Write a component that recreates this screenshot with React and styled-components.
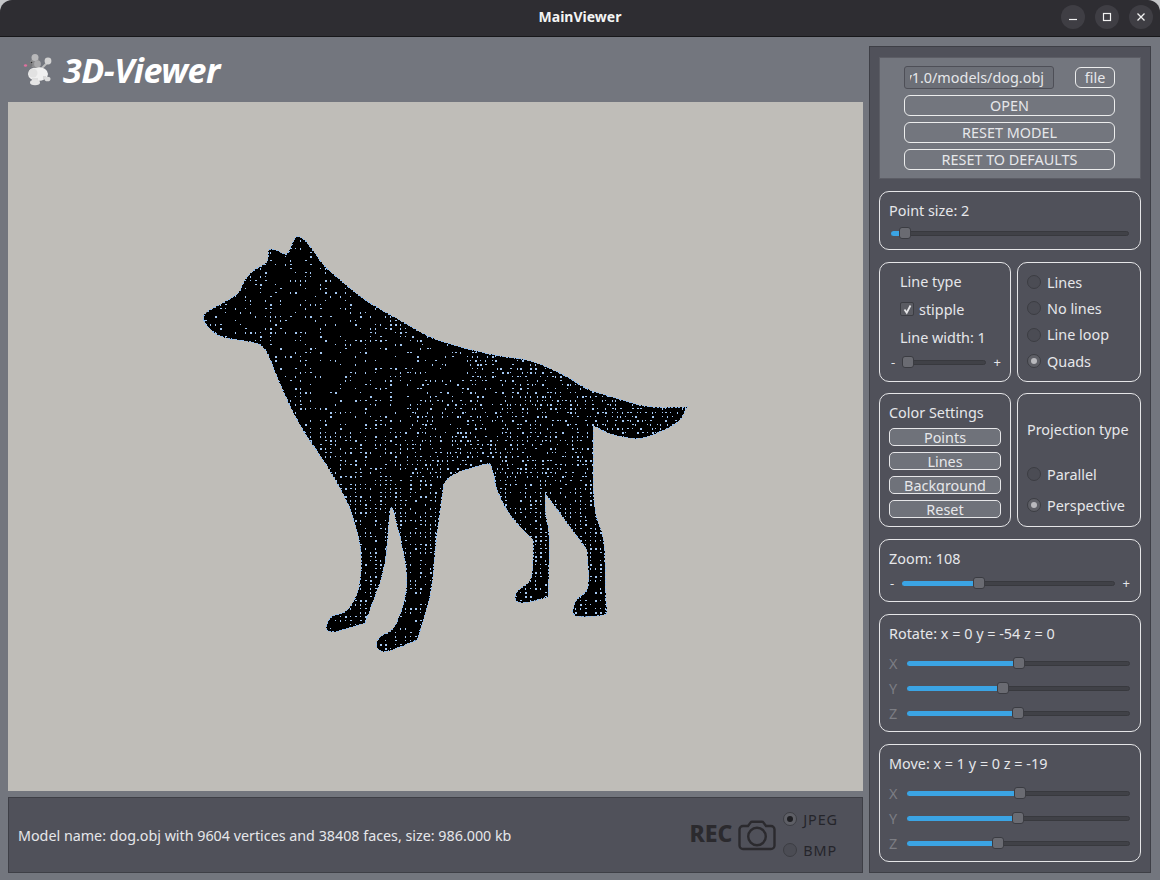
import React from 'react';
import styled, { createGlobalStyle } from 'styled-components';

const GlobalStyle = createGlobalStyle`
    html, body {
        margin: 0;
        padding: 0;
        background: #c4c5c8;
    }
    * {
        box-sizing: border-box;
    }
`;

// outline of the model, in page coordinates
const DOG_OUTLINE = [
    [203, 317], [206, 312], [223, 303], [240, 293], [243, 282], [253, 270], [268, 263], [268, 255], [269, 248], [279, 251], [287, 256], [292, 245], [295, 237],
    [299, 236], [305, 240], [315, 253], [323, 265], [340, 280], [367, 302], [403, 322], [430, 338], [463, 348], [497, 356], [530, 360],
    [547, 367], [570, 378], [587, 390], [617, 398], [647, 408], [687, 407], [687, 407], [680, 422], [660, 432], [643, 439], [627, 438],
    [607, 433], [594, 426], [593, 426], [593, 513], [605, 537], [605, 587], [607, 613], [607, 615], [583, 617], [574, 616], [572, 610], [577, 598], [590, 590], [587, 550], [587, 550], [545, 493], [545, 493],
    [545, 515], [550, 533], [548, 597], [548, 597], [527, 603], [515, 602], [515, 594], [522, 587], [533, 580], [533, 540], [533, 540], [513, 520], [497, 493],
    [492, 465], [487, 463], [445, 476], [442, 497], [435, 547], [432, 593], [417, 640], [417, 640], [388, 652], [378, 651], [376, 643], [380, 636],
    [395, 630], [407, 593], [407, 567], [393, 507], [390, 507], [388, 533], [385, 570], [365, 623], [365, 623], [337, 632], [326, 632],
    [327, 622], [333, 615], [347, 613], [360, 590], [362, 553], [355, 523], [347, 500], [325, 462], [300, 427], [277, 378], [265, 345],
    [247, 341], [223, 338], [213, 332], [205, 324],
];

// corners are cut through the midpoints, so the silhouette stays soft as in the render
const buildDogPath = (points) => {
    const mid = (a, b) => [(a[0] + b[0]) / 2, (a[1] + b[1]) / 2];
    const start = mid(points[points.length - 1], points[0]);
    let d = `M${start[0]} ${start[1]}`;
    points.forEach((p, i) => {
        const m = mid(p, points[(i + 1) % points.length]);
        d += `Q${p[0]} ${p[1]} ${m[0]} ${m[1]}`;
    });
    return d + 'Z';
};
const DOG_PATH = buildDogPath(DOG_OUTLINE);

const buildDots = () => {
    let seed = 1337;
    const rand = () => {
        seed = (seed * 16807) % 2147483647;
        return seed / 2147483647;
    };
    let d = '';
    for (let y = 236; y < 655; y += 4) {
        for (let x = 200; x < 690; x += 5) {
            // the front of the chest is sparse, the belly and the tail are dense
            let keep = 0.55;
            if (x < 410 && y < 430) keep = 0.32;
            if (x > 410 && y < 480) keep = 0.62;
            if (x > 595) keep = 0.75;
            if (x > 300 && y > 340 && y < 400 && x < 470) keep = 0.3;
            if (rand() > keep) continue;
            const jitter = x > 400 && y < 480 && rand() > 0.5 ? 2 : 0;
            const w = rand() > 0.65 ? 2 : 1;
            const h = rand() > 0.5 ? 2 : 1;
            d += `M${x + jitter} ${y}h${w}v${h}h-${w}z`;
        }
    }
    return d;
};
const DOG_DOTS = buildDots();

const Slider = ({ width, at }) => (
    <Track $width={width}>
        <TrackFill $at={at} />
        <Handle $at={at} />
    </Track>
);

const Radio = ({ label, checked, dark }) => (
    <RadioRow $dark={dark}>
        <RadioMark $checked={checked} $dark={dark} />
        {label}
    </RadioRow>
);

const AxisSliders = ({ rows }) => (
    <AxisList>
        {rows.map((row) => (
            <AxisRow key={row.name}>
                <AxisName>{row.name}</AxisName>
                <Slider width={row.width} at={row.at} />
            </AxisRow>
        ))}
    </AxisList>
);

const App = () => {
    return (
        <Window>
            <GlobalStyle />
            <TitleBar>
                <WindowTitle>MainViewer</WindowTitle>
                <WindowControls>
                    <WindowButton aria-label="minimize">
                        <svg width="12" height="12" viewBox="0 0 12 12"><path d="M2 8.5h8" stroke="#f2f2f2" strokeWidth="1.2" /></svg>
                    </WindowButton>
                    <WindowButton aria-label="maximize">
                        <svg width="12" height="12" viewBox="0 0 12 12"><rect x="2.5" y="2.5" width="7" height="7" fill="none" stroke="#f2f2f2" strokeWidth="1.2" /></svg>
                    </WindowButton>
                    <WindowButton aria-label="close">
                        <svg width="12" height="12" viewBox="0 0 12 12"><path d="M2.5 2.5l7 7M9.5 2.5l-7 7" stroke="#f2f2f2" strokeWidth="1.3" /></svg>
                    </WindowButton>
                </WindowControls>
            </TitleBar>

            <Content>
                <ViewerColumn>
                    <Header>
                        <svg width="30" height="32" viewBox="0 0 30 32">
                            <path d="M19 14l6-6" stroke="#bdbdbd" strokeWidth="2" />
                            <circle cx="25" cy="7" r="3.4" fill="#d2d2d2" />
                            <ellipse cx="15" cy="20" rx="10" ry="7" fill="#f0f0f0" />
                            <circle cx="10" cy="19" r="4.5" fill="#e2e2e2" />
                            <rect x="9" y="24" width="6" height="4" fill="#e0e0e0" />
                            <rect x="20" y="22" width="3" height="3" fill="#d8d8d8" />
                            <ellipse cx="12" cy="28.5" rx="5" ry="2.7" fill="#e4e4e4" />
                            <ellipse cx="24.5" cy="25" rx="3" ry="2.3" fill="#dcdcdc" />
                            <circle cx="12" cy="9" r="5" fill="#8c8c8e" />
                            <circle cx="12" cy="3.5" r="3.5" fill="#b8b8ba" />
                            <circle cx="14.5" cy="10" r="3.4" fill="#a9a9ab" />
                            <ellipse cx="6" cy="11" rx="3.5" ry="2" fill="#77777a" />
                            <ellipse cx="2.5" cy="11.5" rx="1.6" ry="1.2" fill="#e070a0" />
                            <circle cx="8.5" cy="8.5" r="0.8" fill="#2c2c2c" />
                        </svg>
                        <Heading>3D-Viewer</Heading>
                    </Header>

                    <Canvas>
                        <svg width="855" height="689" viewBox="8 102 855 689" shapeRendering="crispEdges">
                            <defs>
                                <clipPath id="dog-clip"><path d={DOG_PATH} /></clipPath>
                            </defs>
                            <path d={DOG_PATH} fill="#000" stroke="#8ab8ee" strokeWidth="1" strokeDasharray="2 1.5" />
                            <path d={DOG_DOTS} fill="#a4c8f2" clipPath="url(#dog-clip)" />
                        </svg>
                    </Canvas>

                    <StatusBar>
                        <StatusText>Model name: dog.obj with 9604 vertices and 38408 faces, size: 986.000 kb</StatusText>
                        <RecordGroup>
                            <RecLabel>REC</RecLabel>
                            <svg width="38" height="31" viewBox="0 0 38 31" fill="none" stroke="#2b2a2e" strokeWidth="2.4">
                                <path d="M5 6h5l2.5-3.4a2 2 0 0 1 1.6-.8h9.8a2 2 0 0 1 1.6.8L28 6h5a3.5 3.5 0 0 1 3.5 3.5v16a3.5 3.5 0 0 1-3.5 3.5H5a3.5 3.5 0 0 1-3.5-3.5v-16A3.5 3.5 0 0 1 5 6z" />
                                <circle cx="19" cy="16.5" r="8.8" />
                            </svg>
                            <FormatList>
                                <Radio label="JPEG" checked dark />
                                <Radio label="BMP" dark />
                            </FormatList>
                        </RecordGroup>
                    </StatusBar>
                </ViewerColumn>

                <SidePanel>
                    <FileBlock>
                        <FileRow>
                            <PathField>
                                <PathClip>v1.0/models/dog.obj</PathClip>
                            </PathField>
                            <FileButton>file</FileButton>
                        </FileRow>
                        <BlockButton>OPEN</BlockButton>
                        <BlockButton>RESET MODEL</BlockButton>
                        <BlockButton>RESET TO DEFAULTS</BlockButton>
                    </FileBlock>

                    <PointBox>
                        <Label>Point size: 2</Label>
                        <SliderRow>
                            <Slider width={238} at={14} />
                        </SliderRow>
                    </PointBox>

                    <TwoColumns>
                        <LineTypeBox>
                            <Label>Line type</Label>
                            <CheckRow>
                                <CheckMark>
                                    <svg width="11" height="11" viewBox="0 0 11 11"><path d="M2.5 5.5l2.2 3.2L8.5 1.5" fill="none" stroke="#e4e4e6" strokeWidth="1.8" /></svg>
                                </CheckMark>
                                stipple
                            </CheckRow>
                            <Label>Line width: 1</Label>
                            <LineSliderRow>
                                <Sign>-</Sign>
                                <Slider width={83} at={5} />
                                <Sign>+</Sign>
                            </LineSliderRow>
                        </LineTypeBox>
                        <RadioBox>
                            <Radio label="Lines" />
                            <Radio label="No lines" />
                            <Radio label="Line loop" />
                            <Radio label="Quads" checked />
                        </RadioBox>
                    </TwoColumns>

                    <ColorRow>
                        <ColorBox>
                            <Label>Color Settings</Label>
                            <ColorButtons>
                                <ColorButton>Points</ColorButton>
                                <ColorButton>Lines</ColorButton>
                                <ColorButton>Background</ColorButton>
                                <ColorButton>Reset</ColorButton>
                            </ColorButtons>
                        </ColorBox>
                        <ProjectionBox>
                            <ProjectionTitle>Projection type</ProjectionTitle>
                            <Radio label="Parallel" />
                            <Radio label="Perspective" checked />
                        </ProjectionBox>
                    </ColorRow>

                    <ZoomBox>
                        <Label>Zoom: 108</Label>
                        <ZoomSliderRow>
                            <Sign>-</Sign>
                            <Slider width={213} at={77} />
                            <Sign>+</Sign>
                        </ZoomSliderRow>
                    </ZoomBox>

                    <AxisBox>
                        <Label>Rotate: x = 0 y = -54 z = 0</Label>
                        <AxisSliders
                            rows={[
                                { name: 'X', width: 223, at: 112 },
                                { name: 'Y', width: 223, at: 96 },
                                { name: 'Z', width: 223, at: 111 },
                            ]}
                        />
                    </AxisBox>

                    <AxisBox>
                        <Label>Move: x = 1 y = 0 z = -19</Label>
                        <AxisSliders
                            rows={[
                                { name: 'X', width: 223, at: 113 },
                                { name: 'Y', width: 223, at: 111 },
                                { name: 'Z', width: 223, at: 91 },
                            ]}
                        />
                    </AxisBox>
                </SidePanel>
            </Content>
        </Window>
    );
};

export default App;

const FONT = `"Noto Sans", "Open Sans", sans-serif`;
const TEXT = '#e6e7ea';
const PANEL = '#50515a';
const SURFACE = '#73767e';

const Window = styled.div`
    width: 1160px;
    height: 880px;
    display: flex;
    flex-direction: column;
    overflow: hidden;
    font-family: ${FONT};
    font-size: 14.4px;
    color: ${TEXT};
`;

const TitleBar = styled.div`
    position: relative;
    height: 37px;
    flex-shrink: 0;
    display: flex;
    align-items: center;
    justify-content: center;
    background: #2e2d32;
    border-bottom: 1px solid #17171a;
    border-radius: 12px 12px 0 0;
    padding-bottom: 4px;
`;

const WindowTitle = styled.div`
    color: #f4f4f4;
    font-weight: 700;
    font-size: 14px;
`;

const WindowControls = styled.div`
    position: absolute;
    right: 7px;
    top: 5px;
    display: flex;
    gap: 10px;
`;

const WindowButton = styled.div`
    width: 24px;
    height: 24px;
    border-radius: 50%;
    background: #3f3e44;
    display: flex;
    align-items: center;
    justify-content: center;
`;

const Content = styled.div`
    flex: 1;
    display: flex;
    gap: 6px;
    padding: 0 9px 7px 8px;
    background: ${SURFACE};
    min-height: 0;
`;

const ViewerColumn = styled.div`
    width: 855px;
    display: flex;
    flex-direction: column;
`;

const Header = styled.div`
    height: 65px;
    flex-shrink: 0;
    display: flex;
    align-items: center;
    gap: 10px;
    padding: 1px 0 0 15px;
`;

const Heading = styled.div`
    color: #fff;
    font-size: 34px;
    font-weight: 700;
    font-style: italic;
    letter-spacing: -0.5px;
`;

const Canvas = styled.div`
    height: 689px;
    flex-shrink: 0;
    background: #bfbdb8;
    svg {
        display: block;
    }
`;

const StatusBar = styled.div`
    margin-top: 6px;
    height: 76px;
    display: flex;
    align-items: center;
    justify-content: space-between;
    padding: 0 24px 0 9px;
    background: ${PANEL};
    border: 1px solid #3e3f46;
`;

const StatusText = styled.div`
    padding-top: 1px;
    font-size: 14.3px;
`;

const RecordGroup = styled.div`
    display: flex;
    align-items: center;
`;

const RecLabel = styled.div`
    color: #2b2a2e;
    font-size: 23px;
    font-weight: 800;
    margin: 0 6px 4px 0;
`;

const FormatList = styled.div`
    margin: 0 0 1px 7px;
    display: flex;
    flex-direction: column;
    gap: 11px;
    letter-spacing: 0.9px;
`;

const RadioRow = styled.div`
    display: flex;
    align-items: center;
    gap: 6px;
    height: 20px;
    color: ${(props) => (props.$dark ? '#25252b' : TEXT)};
`;

const RadioMark = styled.span`
    width: 14px;
    height: 14px;
    border-radius: 50%;
    flex-shrink: 0;
    display: flex;
    align-items: center;
    justify-content: center;
    border: 1px solid #3c3d43;
    background: ${(props) => (props.$checked ? '#5e5f66' : '#4b4c54')};
    &::after {
        content: '';
        width: 6px;
        height: 6px;
        border-radius: 50%;
        display: ${(props) => (props.$checked ? 'block' : 'none')};
        background: ${(props) => (props.$dark ? '#1f1f23' : '#b9b9bd')};
    }
`;

const SidePanel = styled.div`
    margin-top: 9px;
    width: 282px;
    height: 827px;
    display: flex;
    flex-direction: column;
    gap: 12px;
    padding: 10px 9px;
    background: ${PANEL};
    border: 1px solid #3e3f46;
`;

const FileBlock = styled.div`
    height: 122px;
    flex-shrink: 0;
    display: flex;
    flex-direction: column;
    gap: 6px;
    padding: 8px 25px 0 24px;
    background: ${SURFACE};
    border: 1px solid #5c5d65;
`;

const FileRow = styled.div`
    display: flex;
    align-items: center;
    justify-content: space-between;
`;

const PathField = styled.div`
    width: 150px;
    height: 23px;
    padding: 0 9px 0 5px;
    display: flex;
    align-items: center;
    background: #6c6f77;
    border: 1px solid #4e4f57;
    border-radius: 3px;
`;

const PathClip = styled.div`
    flex: 1;
    min-width: 0;
    display: flex;
    justify-content: flex-end;
    overflow: hidden;
    white-space: nowrap;
`;

const FileButton = styled.div`
    width: 40px;
    height: 21px;
    display: flex;
    align-items: center;
    justify-content: center;
    border: 1px solid #eceded;
    border-radius: 6px;
    background: ${SURFACE};
`;

const BlockButton = styled.div`
    height: 21px;
    display: flex;
    align-items: center;
    justify-content: center;
    border: 1px solid #eceded;
    border-radius: 6px;
`;

const GroupBox = styled.div`
    border: 1px solid #e6e6e8;
    border-radius: 10px;
    flex-shrink: 0;
`;

const PointBox = styled(GroupBox)`
    height: 59px;
    padding: 9px 10px 0 9px;
`;

const Label = styled.div`
    height: 20px;
    line-height: 20px;
    white-space: nowrap;
`;

const SliderRow = styled.div`
    display: flex;
    align-items: center;
    height: 12px;
    margin-top: 6px;
    padding-left: 2px;
`;

const Track = styled.div`
    position: relative;
    flex-shrink: 0;
    width: ${(props) => props.$width}px;
    height: 5px;
    background: #404147;
    border: 1px solid #38393e;
    border-radius: 3px;
`;

const TrackFill = styled.div`
    position: absolute;
    left: -1px;
    top: -1px;
    height: 5px;
    width: ${(props) => props.$at}px;
    background: #3ba4e4;
    border-radius: 3px 0 0 3px;
`;

const Handle = styled.div`
    position: absolute;
    top: -5px;
    left: ${(props) => props.$at - 7}px;
    width: 12px;
    height: 12px;
    background: #6a6b72;
    border: 1px solid #3b3c42;
    border-radius: 3px;
`;

const TwoColumns = styled.div`
    display: flex;
    gap: 6px;
    flex-shrink: 0;
    height: 120px;
`;

const ColorRow = styled(TwoColumns)`
    height: 134px;
    margin-top: -1px;
`;

const LineTypeBox = styled(GroupBox)`
    width: 132px;
    padding: 9px 10px 0 20px;
    display: flex;
    flex-direction: column;
`;

const CheckRow = styled.div`
    display: flex;
    align-items: center;
    gap: 5px;
    height: 20px;
    margin: 7px 0 9px;
`;

const CheckMark = styled.span`
    width: 14px;
    height: 14px;
    display: flex;
    align-items: center;
    justify-content: center;
    background: #5a5b62;
    border: 1px solid #3c3d43;
    border-radius: 2px;
`;

const LineSliderRow = styled.div`
    display: flex;
    align-items: center;
    justify-content: space-between;
    margin: 7px -1px 0 -9px;
    height: 14px;
`;

const Sign = styled.span`
    font-size: 13px;
    line-height: 14px;
`;

const RadioBox = styled(GroupBox)`
    flex: 1;
    padding: 9px 9px 0;
    display: flex;
    flex-direction: column;
    gap: 6.4px;
`;

const ColorBox = styled(GroupBox)`
    width: 132px;
    padding: 9px 9px 0;
`;

const ColorButtons = styled.div`
    margin-top: 5px;
    display: flex;
    flex-direction: column;
    gap: 6px;
`;

const ColorButton = styled.div`
    height: 18px;
    line-height: 17px;
    text-align: center;
    overflow: hidden;
    background: #6f727a;
    border: 1px solid #e6e6e8;
    border-radius: 5px;
`;

const ProjectionBox = styled(GroupBox)`
    flex: 1;
    padding: 26px 9px 0;
    display: flex;
    flex-direction: column;
    gap: 11px;
`;

const ProjectionTitle = styled(Label)`
    margin-bottom: 13px;
`;

const ZoomBox = styled(GroupBox)`
    height: 63px;
    padding: 9px 10px 0 9px;
`;

const ZoomSliderRow = styled.div`
    display: flex;
    align-items: center;
    justify-content: space-between;
    margin-top: 7px;
    padding-left: 1px;
    height: 14px;
`;

const AxisBox = styled(GroupBox)`
    height: 118px;
    padding: 9px 10px 0 9px;
`;

const AxisList = styled.div`
    margin-top: 10px;
    display: flex;
    flex-direction: column;
    gap: 7px;
`;

const AxisRow = styled.div`
    height: 18px;
    display: flex;
    align-items: center;
    justify-content: space-between;
`;

const AxisName = styled.span`
    color: #7c7d84;
`;
